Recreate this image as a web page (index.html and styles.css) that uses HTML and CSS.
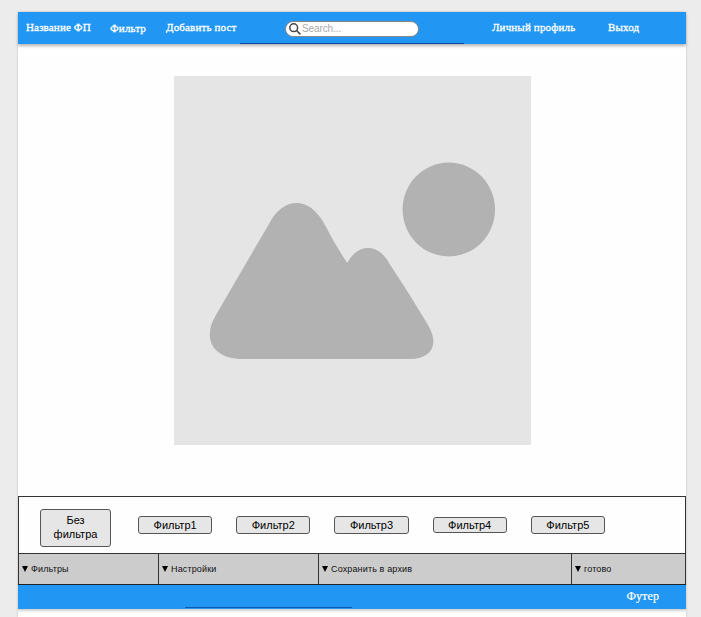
FILE: index.html
```html
<!DOCTYPE html>
<html lang="ru">
<head>
<meta charset="utf-8">
<title>Редактор фото</title>
<link rel="stylesheet" href="styles.css">
</head>
<body>
<div class="page">
  <header class="header">
    <nav class="nav">
      <a class="brand">Название ФП</a>
      <a class="filter-link">Фильтр</a>
      <a class="add-link">Добавить пост</a>
    </nav>
    <label class="search">
      <svg class="search-icon" viewBox="0 0 12 12"><circle cx="4.7" cy="4.7" r="3.9"/><path d="M7.5 7.5 11.4 11.4"/></svg>
      <span>Search...</span>
    </label>
    <nav class="nav account">
      <a class="profile">Личный профиль</a>
      <a class="exit">Выход</a>
    </nav>
    <i class="header-line"></i>
  </header>
  <main class="stage">
    <svg class="photo" viewBox="0 0 357 369">
      <ellipse cx="274.8" cy="133.5" rx="46.2" ry="46.9"/>
      <path d="M95 148C109 121 135 119 151 149Q161 169 173.300 187C184 167 204 167 215 187Q235 217 254 249C266 269 257 283 236 283H69C38 283 28 262 42 239Q68 194 95 148Z"/>
    </svg>
  </main>
  <section class="filters">
    <button class="btn none">Без<br>фильтра</button>
    <button class="btn">Фильтр1</button>
    <button class="btn">Фильтр2</button>
    <button class="btn">Фильтр3</button>
    <button class="btn short">Фильтр4</button>
    <button class="btn">Фильтр5</button>
  </section>
  <div class="tabs">
    <div class="tab"><i class="arrow"></i><span>Фильтры</span></div>
    <div class="tab"><i class="arrow"></i><span>Настройки</span></div>
    <div class="tab"><i class="arrow"></i><span>Сохранить в архив</span></div>
    <div class="tab"><i class="arrow"></i><span>готово</span></div>
  </div>
  <footer class="footer"><span>Футер</span><i class="footer-line"></i></footer>
</div>
</body>
</html>
```
FILE: styles.css
```css
* { box-sizing: border-box; }
body { margin: 0; height: 617px; overflow: hidden; background: #ececec; }
.page {
  width: 668px; height: 605px; margin: 12px 0 0 18px;
  background: #fefefe; box-shadow: 0 0 2px #bbb;
  display: flex; flex-direction: column;
}
.header {
  position: relative; height: 32px; flex: none;
  display: flex; align-items: center;
  background: #2196f3; box-shadow: 0 2px 3px #b5b5b5;
  color: #fff; font: 11px/14px "Liberation Serif", serif;
  letter-spacing: 0.15px;
  -webkit-text-stroke: 0.3px #fff;
}
.nav { display: flex; width: 267px; padding: 0 0 2px 8px; white-space: nowrap; }
.brand { width: 84px; }
.filter-link { width: 56px; padding-top: 1px; }
.search {
  width: 134px; height: 16px; padding-left: 3px; margin-top: 1px;
  display: flex; align-items: center; gap: 1px;
  border: 1px solid #888; border-radius: 8px; background: #fff;
  color: #aaa; font: 10px/14px "Liberation Sans", sans-serif;
  letter-spacing: -0.25px;
  -webkit-text-stroke: 0;
}
.search span { letter-spacing: -0.3px; }
.search-icon { width: 12px; height: 12px; fill: none; stroke: #444; stroke-width: 1.5; }
.search span { letter-spacing: -0.1px; }
.account { padding-left: 73px; }
.profile { width: 116px; }
.header-line { position: absolute; left: 222px; bottom: 0; width: 224px; height: 1px; background: #0d4aa0; }
.stage { height: 452px; flex: none; padding: 32px 0 0 156px; }
.photo { display: block; width: 357px; height: 369px; background: #e5e5e5; fill: #b2b2b2; }
.filters {
  height: 58px; flex: none; border: 1px solid #333;
  display: flex; align-items: center; gap: 24px; padding: 0 0 0 21px;
}
.btn {
  width: 74.2px; height: 18px; flex: none; padding: 0 0 1px;
  border: 1px solid #555; border-radius: 3px; background: #e6e6e6; color: #000;
  font: 11px/14px "Liberation Sans", sans-serif;
}
.btn.none { width: 71px; height: 38px; margin-right: 3px; margin-top: 6px; padding-bottom: 2px; }
.btn.short { height: 16px; line-height: 13px; padding-bottom: 0; }
.tabs {
  display: grid; grid-template-columns: 140px 160px 253px 115px;
  height: 31px; flex: none; background: #ccc;
  border-bottom: 1px solid #222;
  font: 9px/12px "Liberation Sans", sans-serif; color: #111;
  letter-spacing: 0.14px;
}
.tab { display: flex; align-items: center; gap: 3px; padding-left: 3px; border-left: 1px solid #333; }
.tab:last-child { border-right: 1px solid #333; }
.arrow { width: 6px; height: 6px; background: #000; clip-path: polygon(0 0, 100% 0, 50% 100%); }
.footer {
  position: relative; height: 24px; flex: none;
  display: flex; justify-content: flex-end; align-items: center; padding: 0 27px 2px 0;
  background: #2196f3; box-shadow: 0 2px 2px #d0d0d0;
  color: #fff; font: 12px/14px "Liberation Serif", serif;
  letter-spacing: 0.1px;
  -webkit-text-stroke: 0.2px #fff;
}
.footer-line { position: absolute; left: 167px; bottom: 1px; width: 167px; height: 1px; background: #0d5ab5; }
```
